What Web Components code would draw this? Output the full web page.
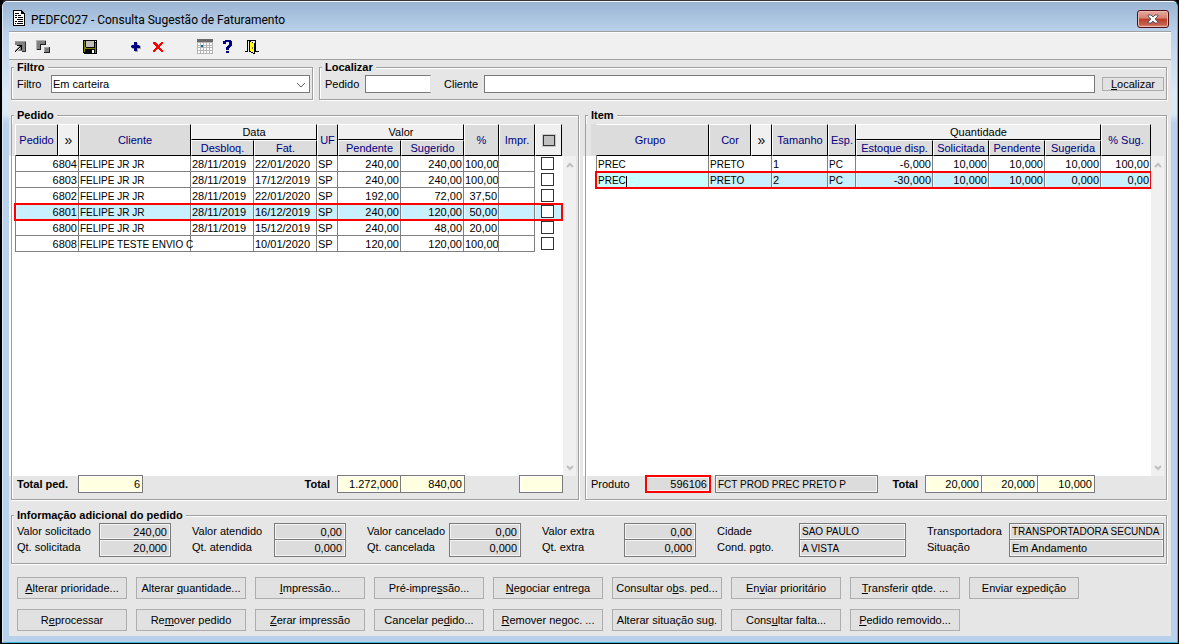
<!DOCTYPE html>
<html lang="pt-BR">
<head>
<meta charset="utf-8">
<title>PEDFC027 - Consulta Sugestão de Faturamento</title>
<style>
    html, body {
        height: 100%;
        margin: 0;
    }

    body {
        background: #000;
        color: #000;
        font: 11px/13px "Liberation Sans", Arial, sans-serif;
    }

    .filters {
        display: flex;
        gap: 6px;
    }

    .filters group-box:first-child {
        flex: 0 0 302px;
    }

    .filters group-box:last-child {
        flex: 1;
    }

    .panels {
        display: flex;
        flex: 1;
        gap: 6px;
        min-height: 0;
    }

    .panels group-box:first-child {
        flex: 568 1 0;
    }

    .panels group-box:last-child {
        flex: 582 1 0;
    }
</style>
</head>
<body>
<app-window>
    <span slot="title">PEDFC027 - Consulta Sugestão de Faturamento</span>
    <tool-bar slot="toolbar"></tool-bar>
    <div class="filters">
        <group-box><span slot="legend">Filtro</span><order-filter></order-filter></group-box>
        <group-box><span slot="legend">Localizar</span><order-search></order-search></group-box>
    </div>
    <div class="panels">
        <group-box><span slot="legend">Pedido</span>
            <grid-area><order-table></order-table></grid-area>
            <order-totals></order-totals>
        </group-box>
        <group-box><span slot="legend">Item</span>
            <grid-area><item-table></item-table></grid-area>
            <item-totals></item-totals>
        </group-box>
    </div>
    <group-box><span slot="legend">Informação adicional do pedido</span><order-info></order-info></group-box>
    <action-bar></action-bar>
</app-window>

<script>
// Registers an element whose shadow root is filled from a string.
function component(name, html, setup) {
    customElements.define(name, class extends HTMLElement {
        constructor() {
            super();
            const shadowRoot = this.attachShadow({ mode: 'open' });
            shadowRoot.innerHTML = html;
            if (setup) setup(shadowRoot);
        }
    });
}

// Styles shared by every element that holds text boxes.
const fieldStyles = `
    input {
        box-sizing: border-box;
        width: 100%;
        min-width: 0;
        height: 18px;
        margin: 0;
        padding: 0 2px;
        border: 1px solid #7a7a7a;
        border-radius: 0;
        background: #fff;
        color: #000;
        font: inherit;
        outline: none;
    }
    input.total {
        background: #ffffe1;
        box-shadow: inset 0 0 0 1px #fff;
        text-align: right;
    }
    input.fixed {
        background: #dcdcdc;
        box-shadow: inset 0 0 0 1px #f4f4f4;
    }
    input.caps {
        font-size: 10px;
    }
`;

component('app-window', `
    <style>
        :host {
            box-sizing: border-box;
            display: flex;
            flex-direction: column;
            height: 100vh;
            min-height: 440px;
            border: 1px solid #000;
            border-top-color: #35323c;
            border-left-width: 2px;
            border-radius: 6px 6px 0 0;
            overflow: hidden;
        }
        .frame {
            box-sizing: border-box;
            display: flex;
            flex: 1;
            flex-direction: column;
            min-height: 0;
            padding: 0 6px 6px 6px;
            border: 1px solid #3cb8d8;
            border-top-color: #f4f8fc;
            border-left-color: #dce9f5;
            border-radius: 5px 5px 0 0;
            background: linear-gradient(#9ab4d3, #b9d1ea 29px, #dce9f7 90px, #dce9f7 112px, #b9d1ea 121px);
        }
        header {
            display: flex;
            align-items: center;
            height: 29px;
            padding: 4px 2px 0 3px;
            box-sizing: border-box;
        }
        h1 {
            flex: 1;
            margin: 2px 0 0 4px;
            font: 12px/16px Roboto, sans-serif;
        }
        .close {
            display: grid;
            place-items: center;
            width: 32px;
            height: 18px;
            padding: 0;
            border: 1px solid #4b1018;
            border-radius: 3px;
            background: linear-gradient(#e8aa9f, #d7806f 45%, #b83d28 50%, #c9604c 85%, #de907b);
            box-shadow: inset 0 0 0 1px #edb9ae;
        }
        .client {
            display: flex;
            flex: 1;
            flex-direction: column;
            min-height: 0;
            border-top: 1px solid #a0a0a0;
            background: #e6e6e6;
        }
        main {
            display: flex;
            flex: 1;
            flex-direction: column;
            gap: 9px;
            min-height: 0;
            padding: 1px 4px 5px 2px;
        }
    </style>
    <div class="frame">
        <header>
            <svg width="15" height="17" shape-rendering="crispEdges" aria-hidden="true">
                <path d="M1 0h9v1h1v1h1v1h1v13H1z" fill="#000"/>
                <path d="M2 1h7v3h3v11H2z" fill="#fff"/>
                <path d="M3 3h4v1H3zM6 5h3v1H6zM3 7h2v1H3zM6 7h5v1H6zM5 9h6v1H5zM3 11h2v1H3zM6 11h5v1H6zM5 13h6v1H5zM3 5h2v1H3zM3 13h1v1H3z" fill="#000"/>
            </svg>
            <h1><slot name="title"></slot></h1>
            <button class="close" aria-label="Fechar">
                <svg width="12" height="10" aria-hidden="true">
                    <path d="M1 1h3l2 2 2-2h3v1L8 5l3 3v1H8L6 7 4 9H1V8l3-3-3-3z" fill="#fff" stroke="#555a70"/>
                </svg>
            </button>
        </header>
        <div class="client">
            <slot name="toolbar"></slot>
            <main><slot></slot></main>
        </div>
    </div>
`);

component('tool-bar', `
    <style>
        :host {
            box-sizing: border-box;
            display: flex;
            align-items: center;
            height: 28px;
            padding: 2px 5px 0;
            border-top: 1px solid #fff;
            border-bottom: 1px solid #a0a0a0;
            background: #f0f0f0;
        }
        button {
            display: block;
            padding: 0;
            border: 0;
            background: none;
        }
        button svg {
            display: block;
        }
        .group {
            display: flex;
            gap: 7px;
            margin-right: 31px;
        }
        .group:nth-of-type(3) {
            margin-right: 29px;
        }
        .group:nth-of-type(4) {
            gap: 8px;
        }
    </style>
    <div class="group">
        <button aria-label="Restaurar"><svg width="15" height="16" shape-rendering="crispEdges">
            <path d="M1 2h11v11H8v-1H1z" fill="#808080"/>
            <path d="M1 2h11v1H1z" fill="#a0a0a0"/>
            <path d="M11 3h1v10H8v-1h3z" fill="#303030"/>
            <path d="M1 6h2v1h2v1H4v1H3v1H2v1H1zM5 9h1v1H5v1H4v1H3v1H2v-1h1v-1h1v-1h1z" fill="#f0f0f0"/>
            <path d="M3 6h5v5H7V8H6v1H5v1H4v1H3v1H2v1H1v-1h1v-1h1v-1h1V9h1V8h1V7H3z" fill="#000"/>
        </svg></button>
        <button aria-label="Organizar"><svg width="16" height="16" shape-rendering="crispEdges">
            <path d="M0 1h10v5H5v5H0z" fill="#808080"/>
            <path d="M0 1h10v1H1v9H0z" fill="#b0b0b0"/>
            <path d="M9 2h1v4H5v5H1v-1h3V5h5z" fill="#202020"/>
            <path d="M8 8h6v6H8z" fill="#202020"/>
            <path d="M8 8h5v5H8z" fill="#808080"/>
            <path d="M8 8h5v1H9v4H8z" fill="#a8a8a8"/>
        </svg></button>
    </div>
    <div class="group">
        <button aria-label="Salvar"><svg width="15" height="16" shape-rendering="crispEdges">
            <path d="M0 1h14v14H1v-1H0z" fill="#000"/>
            <path d="M1 2h1v11H1zM12 4h1v10h-1zM2 8h1v1h9v1H2z" fill="#808000"/>
            <path d="M3 2h8v6H3z" fill="#c0c0c0"/>
            <path d="M12 2h1v1h-1zM9 11h2v3H9z" fill="#fff"/>
        </svg></button>
    </div>
    <div class="group">
        <button aria-label="Incluir"><svg width="16" height="16" shape-rendering="crispEdges">
            <path d="M6 4h3v3h3v3H9v3H6v-3H3V7h3z" fill="#a8a8a8"/>
            <path d="M5 3h3v3h3v3H8v3H5V9H2V6h3z" fill="#000080"/>
            <path d="M2 6h1v1H2zM2 8h1v1H2zM10 6h1v1h-1z" fill="#8080b0"/>
        </svg></button>
        <button aria-label="Excluir"><svg width="16" height="16" shape-rendering="crispEdges">
            <path d="M1 3h3v1h1v1h1v1h1V5h1V4h1V3h2v2h-1v1H9v1H8v2h1v1h1v1h1v2H9v-1H8v-1H7v-1H5v1H4v1H3v1H1v-2h1v-1h1V9h1V7H3V6H2V5H1z" fill="#f00"/>
        </svg></button>
    </div>
    <div class="group">
        <button aria-label="Calendário"><svg width="16" height="16" shape-rendering="crispEdges">
            <path d="M0 0h16v15H0z" fill="#b4b4b4"/>
            <path d="M0 0h16v3H0z" fill="#696969"/>
            <path d="M1 4h2v2H1zM4 4h2v2H4zM7 4h2v2H7zM10 4h2v2h-2zM13 4h2v2h-2zM1 7h2v1H1zM7 7h2v1H7zM10 7h2v1h-2zM13 7h2v1h-2zM1 9h2v2H1zM4 9h2v2H4zM7 9h2v2H7zM10 9h2v2h-2zM13 9h2v2h-2zM1 12h2v2H1zM4 12h2v2H4zM7 12h2v2H7zM10 12h2v2h-2zM13 12h2v2h-2z" fill="#fff"/>
            <path d="M4 6h2v2H4z" fill="#006a9e"/>
        </svg></button>
        <button aria-label="Ajuda"><svg width="16" height="16" shape-rendering="crispEdges">
            <path d="M4 1h6v1h1v5h-1v1H9v1H8v2H5V8h1V7h1V6h1V3H5v2H2V2h2zM5 12h3v2H5z" fill="#000080"/>
        </svg></button>
        <button aria-label="Sair"><svg width="16" height="16" shape-rendering="crispEdges">
            <path d="M2 1h9v11h3v1h-4V2H3v11H-1v-1h3z" fill="#000"/>
            <path d="M4 2h2v1h2v1h2v11H8v-1H6v-1H4z" fill="#000"/>
            <path d="M5 3h2v1h2v10H8v-1H6v-1H5z" fill="#ff0"/>
            <path d="M7 8h1v2H7z" fill="#808000"/>
        </svg></button>
    </div>
`);

component('group-box', `
    <style>
        :host {
            display: flex;
            min-width: 0;
        }
        fieldset {
            display: flex;
            flex: 1;
            flex-direction: column;
            min-width: 0;
            margin: 0;
            padding: 0 0 6px;
            border: 1px solid #a0a0a0;
            box-shadow: 1px 1px #fff, inset 1px 1px #fff;
        }
        legend {
            margin-left: 2px;
            padding: 0 3px;
            background: #e6e6e6;
            font-weight: bold;
            line-height: 13px;
        }
    </style>
    <fieldset>
        <legend><slot name="legend"></slot></legend>
        <slot></slot>
    </fieldset>
`);

component('order-filter', `
    <style>
        :host {
            display: flex;
            align-items: center;
            padding: 1px 2px 0 5px;
        }
        label {
            width: 34px;
        }
        .combo {
            position: relative;
            flex: 1;
        }
        select {
            display: block;
            width: 100%;
            height: 18px;
            padding: 0 1px;
            border: 1px solid #7a7a7a;
            border-radius: 0;
            background: #fff;
            color: #000;
            font: inherit;
            appearance: none;
        }
        svg {
            position: absolute;
            right: 4px;
            top: 7px;
            pointer-events: none;
        }
    </style>
    <label for="filter">Filtro</label>
    <div class="combo">
        <select id="filter"><option>Em carteira</option></select>
        <svg width="9" height="6" fill="none" stroke="#606060" aria-hidden="true"><path d="M0 1l4 4 4-4"/></svg>
    </div>
`);

component('order-search', `
    <style>
        ${fieldStyles}
        :host {
            display: grid;
            grid-template-columns: 40px 66px 13px 40px 1fr 7px 62px;
            align-items: center;
            padding: 1px 2px 0 5px;
        }
        #order {
            border-right-color: #e6e6e6;
        }
        #client {
            grid-column: 5;
        }
        label[for="client"] {
            grid-column: 4;
        }
        button {
            grid-column: 7;
            height: 14px;
            padding: 0;
            border: 1px solid #adadad;
            background: #e1e1e1;
            color: #000;
            font: inherit;
            line-height: 12px;
        }
    </style>
    <label for="order">Pedido</label>
    <input id="order">
    <label for="client">Cliente</label>
    <input id="client">
    <button><u>L</u>ocalizar</button>
`);

// White list area with its disabled scroll bar; the table header stays on grey.
component('grid-area', `
    <style>
        :host {
            position: relative;
            display: flex;
            flex: 1;
            justify-content: space-between;
            min-height: 0;
            margin: 2px 2px 0 0;
            background: linear-gradient(#e6e6e6 32px, #fff 32px);
        }
        /* the list starts slightly before the frame line */
        :host::before {
            content: "";
            position: absolute;
            left: -3px;
            top: 32px;
            bottom: 0;
            width: 2px;
            background: #fff;
        }
        .scroll {
            display: flex;
            flex: 0 0 13px;
            flex-direction: column;
            align-items: center;
            justify-content: space-between;
            box-sizing: border-box;
            margin-top: 32px;
            padding: 6px 0 5px;
            background: #f0f0f0;
        }
        svg {
            fill: none;
            stroke: #bfbfbf;
            stroke-width: 2;
        }
    </style>
    <slot></slot>
    <div class="scroll" aria-hidden="true">
        <svg width="8" height="6"><path d="M1 5l3-3 3 3"/></svg>
        <svg width="8" height="6"><path d="M1 1l3 3 3-3"/></svg>
    </div>
`);

const tableStyles = `
    table {
        table-layout: fixed;
        border-collapse: separate;
        border-spacing: 0;
    }
    th, td {
        box-sizing: border-box;
        height: 16px;
        overflow: hidden;
        white-space: nowrap;
    }
    th {
        border: 1px solid #000;
        border-top-color: #fff;
        border-left-color: #fff;
        background: #dcdcdc;
        color: #000080;
        font-weight: normal;
        line-height: 13px;
        padding: 0;
    }
    th.plain {
        background: #f0f0f0;
        color: #000;
    }
    th.more {
        font-size: 14px;
    }
    td {
        padding: 1px 1px 0;
        border-right: 1px solid #808080;
        border-bottom: 1px solid #808080;
        background: #fff;
        line-height: 14px;
    }
    td:first-child {
        border-left: 1px solid #808080;
    }
    .num {
        text-align: right;
    }
    .caps {
        padding-top: 2px;
        overflow: visible;
        font-size: 10px;
        line-height: 13px;
    }
    tr.current td {
        background: #c8f0ff;
        box-shadow: inset 1px 0 #e6f8ff;
    }
    tr.current {
        outline: 2px solid #f00;
        outline-offset: -1px;
    }
`;

// Builds the cells of one row; columns maps a cell's index to its class and span.
function row(cells, columns) {
    return cells.map((text, i) => {
        const { cls = '', span = 1 } = columns[i] || {};
        return `<td class="${cls}" colspan="${span}">${text}</td>`;
    }).join('');
}

const orders = [
    ['6804', 'FELIPE JR JR', '28/11/2019', '22/01/2020', 'SP', '240,00', '240,00', '100,00', ''],
    ['6803', 'FELIPE JR JR', '28/11/2019', '17/12/2019', 'SP', '240,00', '240,00', '100,00', ''],
    ['6802', 'FELIPE JR JR', '28/11/2019', '22/01/2020', 'SP', '192,00', '72,00', '37,50', ''],
    ['6801', 'FELIPE JR JR', '28/11/2019', '16/12/2019', 'SP', '240,00', '120,00', '50,00', ''],
    ['6800', 'FELIPE JR JR', '28/11/2019', '15/12/2019', 'SP', '240,00', '48,00', '20,00', ''],
    ['6808', 'FELIPE TESTE ENVIO C', '', '10/01/2020', 'SP', '120,00', '120,00', '100,00', '']
];

component('order-table', `
    <style>
        ${tableStyles}
        :host {
            display: block;
            padding-left: 3px;
        }
        table {
            width: 547px;
        }
        td.mark {
            border: 0;
            padding: 0;
        }
        input {
            display: block;
            width: 13px;
            height: 13px;
            margin: 1px 0 2px 6px;
            border: 1px solid #333;
            background: #fff;
            appearance: none;
        }
        th input {
            width: 12px;
            height: 11px;
            margin: 0 auto;
            background: #c0c0c0;
            box-shadow: 0 0 0 1px #c8c8c8;
        }
    </style>
    <table>
        <colgroup>
            <col style="width:43px"><col style="width:21px"><col style="width:112px"><col style="width:63px">
            <col style="width:63px"><col style="width:21px"><col style="width:63px"><col style="width:63px">
            <col style="width:35px"><col style="width:36px"><col style="width:27px">
        </colgroup>
        <thead>
            <tr>
                <th rowspan="2">Pedido</th><th rowspan="2" class="plain more">»</th><th rowspan="2">Cliente</th>
                <th colspan="2" class="plain">Data</th><th rowspan="2">UF</th>
                <th colspan="2" class="plain">Valor</th><th rowspan="2">%</th><th rowspan="2">Impr.</th>
                <th rowspan="2" class="plain"><input type="checkbox" aria-label="Marcar todos"></th>
            </tr>
            <tr><th>Desbloq.</th><th>Fat.</th><th>Pendente</th><th>Sugerido</th></tr>
        </thead>
        <tbody></tbody>
    </table>
`, root => {
    const num = { cls: 'num' };
    const columns = { 0: { cls: 'num', span: 2 }, 1: { cls: 'caps' }, 5: num, 6: num, 7: num };
    root.querySelector('tbody').innerHTML = orders.map(order => `
        <tr class="${order[0] === '6801' ? 'current' : ''}">${row(order, columns)}
            <td class="mark"><input type="checkbox" aria-label="Marcar ${order[0]}"></td></tr>`).join('');
});

const items = [
    ['PREC', 'PRETO', '1', 'PC', '-6,000', '10,000', '10,000', '10,000', '100,00'],
    ['PREC', 'PRETO', '2', 'PC', '-30,000', '10,000', '10,000', '0,000', '0,00']
];

component('item-table', `
    <style>
        ${tableStyles}
        :host {
            display: block;
            padding-left: 10px;
        }
        table {
            width: 555px;
        }
        th.first {
            padding-right: 5px;
            box-shadow: -5px 0 #dcdcdc;
            border-left-color: #dcdcdc;
        }
        tr.current td:first-child {
            background: #c8ffff;
        }
        tr.current td:first-child::after {
            content: "";
            display: inline-block;
            width: 1px;
            height: 11px;
            background: #000;
            vertical-align: middle;
        }
    </style>
    <table>
        <colgroup>
            <col style="width:113px"><col style="width:42px"><col style="width:21px"><col style="width:56px">
            <col style="width:28px"><col style="width:77px"><col style="width:56px"><col style="width:56px">
            <col style="width:56px"><col style="width:50px">
        </colgroup>
        <thead>
            <tr>
                <th rowspan="2" class="first">Grupo</th><th rowspan="2">Cor</th><th rowspan="2" class="plain more">»</th>
                <th rowspan="2">Tamanho</th><th rowspan="2">Esp.</th>
                <th colspan="4" class="plain">Quantidade</th><th rowspan="2">% Sug.</th>
            </tr>
            <tr><th>Estoque disp.</th><th>Solicitada</th><th>Pendente</th><th>Sugerida</th></tr>
        </thead>
        <tbody></tbody>
    </table>
`, root => {
    const num = { cls: 'num' };
    const columns = { 0: { cls: 'caps' }, 1: { cls: 'caps', span: 2 }, 3: { cls: 'caps' }, 4: num, 5: num, 6: num, 7: num, 8: num };
    root.querySelector('tbody').innerHTML = items.map((item, i) =>
        `<tr class="${i === 1 ? 'current' : ''}">${row(item, columns)}</tr>`).join('');
});

const totalStyles = `
    :host {
        display: grid;
        align-items: center;
        height: 18px;
        margin-top: -1px;
        position: relative;
    }
    .caption {
        font-weight: bold;
    }
    .sum {
        padding-right: 7px;
        text-align: right;
    }
`;

component('order-totals', `
    <style>
        ${fieldStyles}
        ${totalStyles}
        :host {
            grid-template-columns: 61px 65px 1fr 64px 64px 54px 44px;
            padding: 0 15px 0 5px;
        }
        .joined {
            margin-left: -1px;
            width: calc(100% + 1px);
        }
        .last {
            grid-column: 7;
        }
    </style>
    <label class="caption" for="count">Total ped.</label>
    <input id="count" class="total" value="6" readonly>
    <label class="caption sum" for="pending">Total</label>
    <input id="pending" class="total" value="1.272,000" readonly>
    <input class="total joined" aria-label="Total sugerido" value="840,00" readonly>
    <input class="total last" aria-label="Total marcado" readonly>
`);

component('item-totals', `
    <style>
        ${fieldStyles}
        ${totalStyles}
        :host {
            grid-template-columns: 54px 66px 4px 163px 1fr 56px 56px 58px;
            padding: 0 71px 0 5px;
        }
        #product {
            border: 2px solid #f00;
            text-align: right;
        }
        .name {
            grid-column: 4;
        }
        .wide {
            width: calc(100% + 1px);
        }
    </style>
    <label for="product">Produto</label>
    <input id="product" class="fixed" value="596106" readonly>
    <input class="fixed caps name" aria-label="Descrição" value="FCT PROD PREC PRETO P" readonly>
    <label class="caption sum" for="requested">Total</label>
    <input id="requested" class="total wide" value="20,000" readonly>
    <input class="total wide" aria-label="Total pendente" value="20,000" readonly>
    <input class="total" aria-label="Total sugerida" value="10,000" readonly>
`);

// Caption and value pairs, two per column.
const info = [
    ['Valor solicitado', '240,00'], ['Qt. solicitada', '20,000'],
    ['Valor atendido', '0,00'], ['Qt. atendida', '0,000'],
    ['Valor cancelado', '0,00'], ['Qt. cancelada', '0,000'],
    ['Valor extra', '0,00'], ['Qt. extra', '0,000'],
    ['Cidade', 'SAO PAULO'], ['Cond. pgto.', 'A VISTA'],
    ['Transportadora', 'TRANSPORTADORA SECUNDA'], ['Situação', 'Em Andamento']
];

component('order-info', `
    <style>
        ${fieldStyles}
        :host {
            display: grid;
            grid-template-columns: repeat(4, 154px) 189px 1fr;
            grid-template-rows: 17px 17px;
            grid-auto-flow: column;
            column-gap: 21px;
            padding: 1px 2px 0 5px;
        }
        .pair {
            display: flex;
            min-width: 0;
        }
        label {
            flex: 0 0 82px;
            line-height: 16px;
        }
        input {
            flex: 1;
            height: 17px;
        }
        .pair:nth-child(even of .pair) input {
            border-top: 0;
        }
        .pair:nth-child(even of .pair) label {
            line-height: 14px;
        }
        .num input {
            padding-right: 3px;
            text-align: right;
        }
    </style>
`, root => {
    info.forEach(([caption, value], i) => {
        const caps = value === value.toUpperCase() && i >= 8;
        root.innerHTML += `
            <div class="pair${i < 8 ? ' num' : ''}">
                <label for="info${i}">${caption}</label>
                <input id="info${i}" class="fixed${caps ? ' caps' : ''}" value="${value}" readonly>
            </div>`;
    });
});

// An underscore stands before the access key letter.
const actions = [
    '_Alterar prioridade...', 'Alterar _quantidade...', '_Impressão...', 'Pré-impre_ssão...', '_Negociar entrega',
    'Consultar o_bs. ped...', 'En_viar prioritário', '_Transferir qtde. ...', 'Enviar e_xpedição',
    'R_eprocessar', 'Re_mover pedido', '_Zerar impressão', 'Cancelar pe_dido...', '_Remover negoc. ...',
    'Alterar situação su_g.', 'Cons_ultar falta...', '_Pedido removido...'
];

component('action-bar', `
    <style>
        :host {
            display: grid;
            grid-template-columns: repeat(auto-fill, 110px);
            gap: 10px 9px;
            padding: 4px 0 0 6px;
            max-width: 1080px;
        }
        button {
            height: 22px;
            padding: 0;
            border: 1px solid #adadad;
            background: #e1e1e1;
            color: #000;
            font: inherit;
            white-space: nowrap;
        }
    </style>
`, root => {
    root.innerHTML += actions.map(text => `<button>${text.replace(/_(.)/, '<u>$1</u>')}</button>`).join('');
});
</script>
</body>
</html>
